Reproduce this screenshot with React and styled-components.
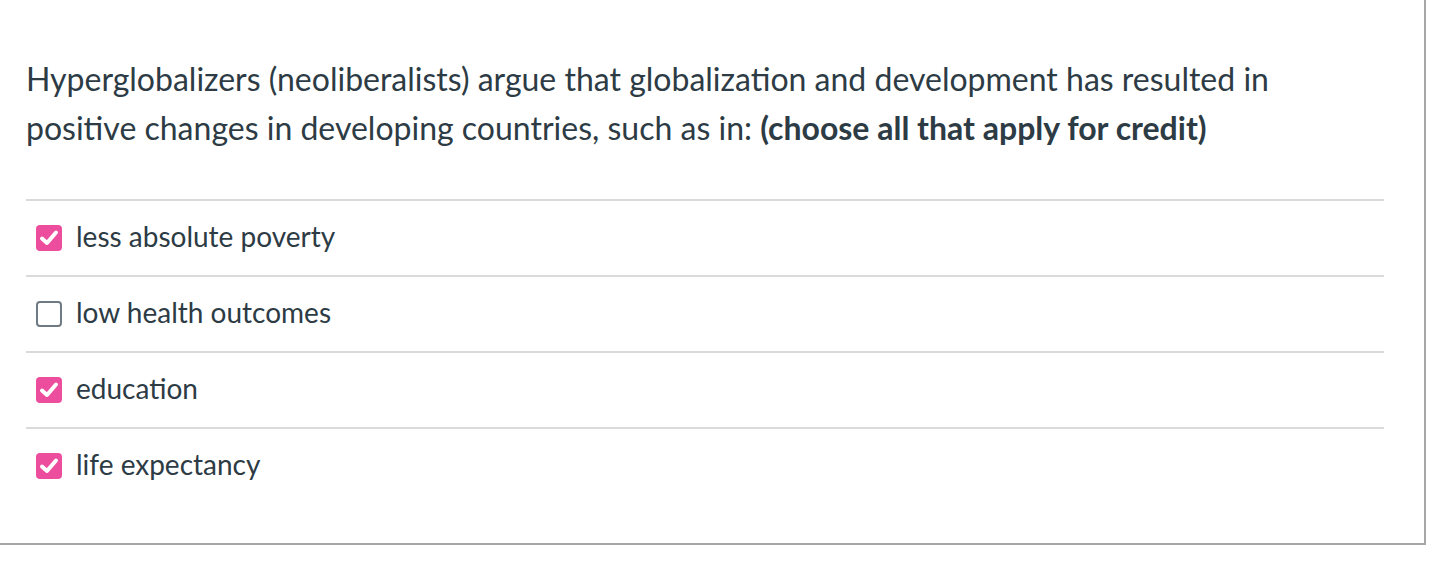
import React from "react";
import styled, { createGlobalStyle } from "styled-components";

const GlobalStyle = createGlobalStyle`
  html, body {
    margin: 0;
    padding: 0;
    background: #fff;
  }
  body {
    font-family: Lato, "Noto Sans", sans-serif;
    color: #2d3b45;
  }
`;

const Panel = styled.div`
  width: 1358px;
  height: 489px;
  padding: 54px 40px 0 26px;
  border-right: 2px solid #a6a6a6;
  border-bottom: 2px solid #a6a6a6;
`;

const Question = styled.p`
  margin: 0;
  font-size: 32px;
  line-height: 49px;

  strong {
    font-weight: 700;
  }
`;

const Answers = styled.div`
  margin-top: 47px;
  display: flex;
  flex-direction: column;
`;

const Row = styled.label`
  display: flex;
  align-items: center;
  gap: 14px;
  height: 74px;
  padding-left: 10px;
  border-top: 2px solid #dadada;
  font-size: 28px;

  span:last-child {
    margin-top: -4px;
  }
`;

const Box = styled.span`
  width: 26px;
  height: 26px;
  box-sizing: border-box;
  border-radius: 4px;
  flex-shrink: 0;
  display: flex;
  align-items: center;
  justify-content: center;
  background: ${(props) => (props.checked ? "#ec4e9d" : "#fff")};
  border: ${(props) => (props.checked ? "none" : "2px solid #6f7b84")};

  svg {
    width: 24px;
    height: 24px;
  }
`;

const answers = [
  { label: "less absolute poverty", checked: true },
  { label: "low health outcomes", checked: false },
  { label: "education", checked: true },
  { label: "life expectancy", checked: true },
];

const Check = () => (
  <svg viewBox="0 0 24 24" fill="none">
    <path
      d="M5 12.5 L10 17 L19 6.5"
      stroke="#fff"
      strokeWidth="4"
      strokeLinecap="round"
      strokeLinejoin="round"
    />
  </svg>
);

const App = () => {
  return (
    <>
      <GlobalStyle />
      <Panel>
        <Question>
          Hyperglobalizers (neoliberalists) argue that globalization and
          development has resulted in positive changes in developing countries,
          such as in: <strong>(choose all that apply for credit)</strong>
        </Question>
        <Answers>
          {answers.map((a) => (
            <Row key={a.label}>
              <Box checked={a.checked}>{a.checked && <Check />}</Box>
              <span>{a.label}</span>
            </Row>
          ))}
        </Answers>
      </Panel>
    </>
  );
};

export default App;
